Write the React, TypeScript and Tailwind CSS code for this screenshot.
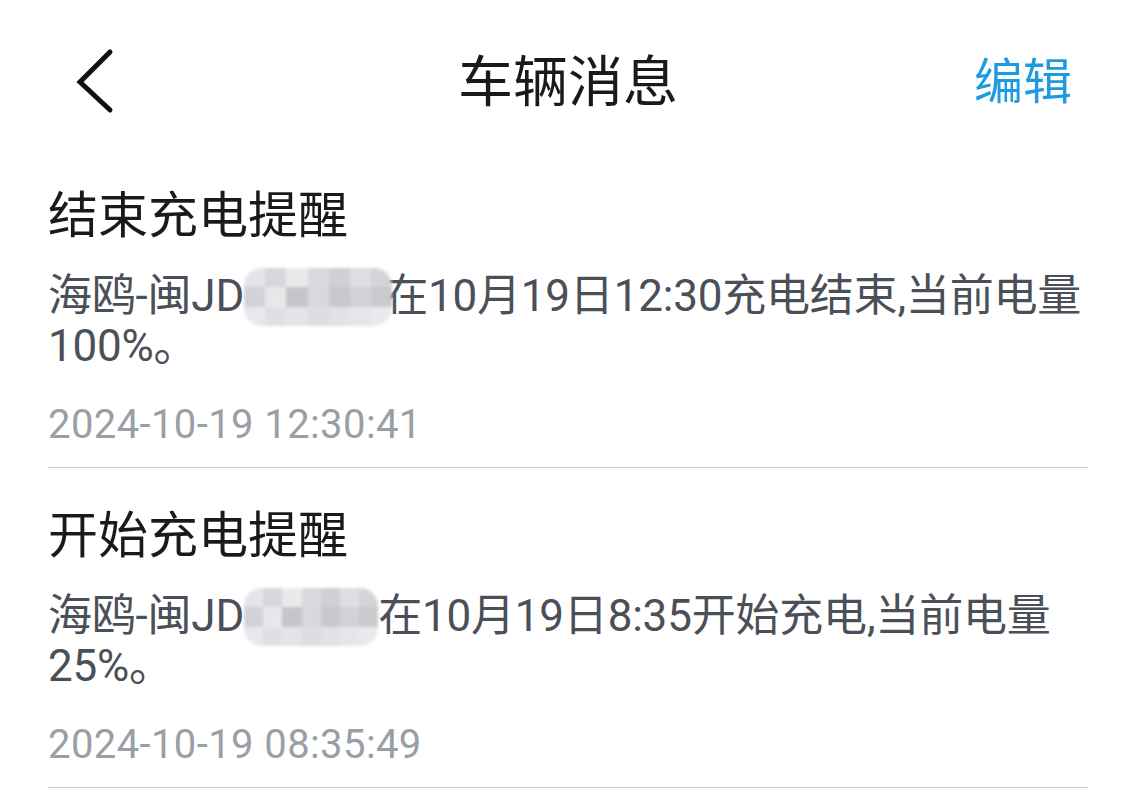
import React from 'react';

const cjk = { fontFamily: 'Roboto, "Noto Sans CJK SC", sans-serif' };

const shades = [
  ['#e4e5e8', '#d6d7db', '#e9eaec', '#d9dadd', '#cfd0d4', '#dedfe2', '#d3d4d8'],
  ['#d2d3d7', '#e7e8ea', '#c4c6cb', '#d8d9dd', '#c7c9cd', '#d1d2d6', '#c9cace'],
  ['#e7e8eb', '#dfe0e3', '#e3e4e7', '#dcdde0', '#e1e2e5', '#e5e6e9', '#e9eaec'],
];

// pixelated cover for the hidden plate number
const Masked = ({ width, over }: { width: number; over: number }) => (
  <span className="relative inline-block h-[50px] align-top" style={{ width }}>
    <span
      className="absolute left-0 -top-[3px] -bottom-[5px] grid grid-rows-3 overflow-hidden rounded-[18px] blur-[1.5px]"
      style={{ right: -over }}
    >
      {shades.map((row, i) => (
        <span key={i} className="flex">
          {row.map((c, j) => (
            <span key={j} className="flex-1" style={{ background: c }} />
          ))}
        </span>
      ))}
    </span>
  </span>
);

type Msg = { title: string; before: string; mask: number; over: number; after: string; time: string };

const msgs: Msg[] = [
  {
    title: '结束充电提醒',
    before: '海鸥-闽JD',
    mask: 140,
    over: 8,
    after: '在10月19日12:30充电结束,当前电量100%。',
    time: '2024-10-19 12:30:41',
  },
  {
    title: '开始充电提醒',
    before: '海鸥-闽JD',
    mask: 134,
    over: 0,
    after: '在10月19日8:35开始充电,当前电量25%。',
    time: '2024-10-19 08:35:49',
  },
];

export default function App() {
  return (
    <div className="w-[1136px] h-[805px] overflow-hidden bg-white px-[48px]" style={cjk}>
      <header className="grid h-[148px] grid-cols-[1fr_auto_1fr] items-center pt-[16px]">
        <svg width="72" height="72" viewBox="0 0 72 72">
          <polyline points="62,6 32,36 62,64" fill="none" stroke="#111" strokeWidth="5" strokeLinecap="round" />
        </svg>
        <h1 className="text-[55px] font-normal leading-none text-[#1a1a1a]">车辆消息</h1>
        <button className="mr-[16px] justify-self-end text-[49px] leading-none text-[#1e9ade]">编辑</button>
      </header>
      {msgs.map((m) => (
        <div key={m.time} className="border-b border-[#cdcdd1] pt-[36px] pb-[20px]">
          <div className="text-[50px] leading-[64px] text-[#1a1a1a]">{m.title}</div>
          <div className="mt-[23px] text-[44px] leading-[50px] tracking-[-0.2px] text-[#4b4f58]">
            {m.before}
            <Masked width={m.mask} over={m.over} />
            {m.after}
          </div>
          <div className="mt-[32px] text-[40px] leading-[44px] tracking-[0.4px] text-[#9a9ea7]">{m.time}</div>
        </div>
      ))}
    </div>
  );
}
